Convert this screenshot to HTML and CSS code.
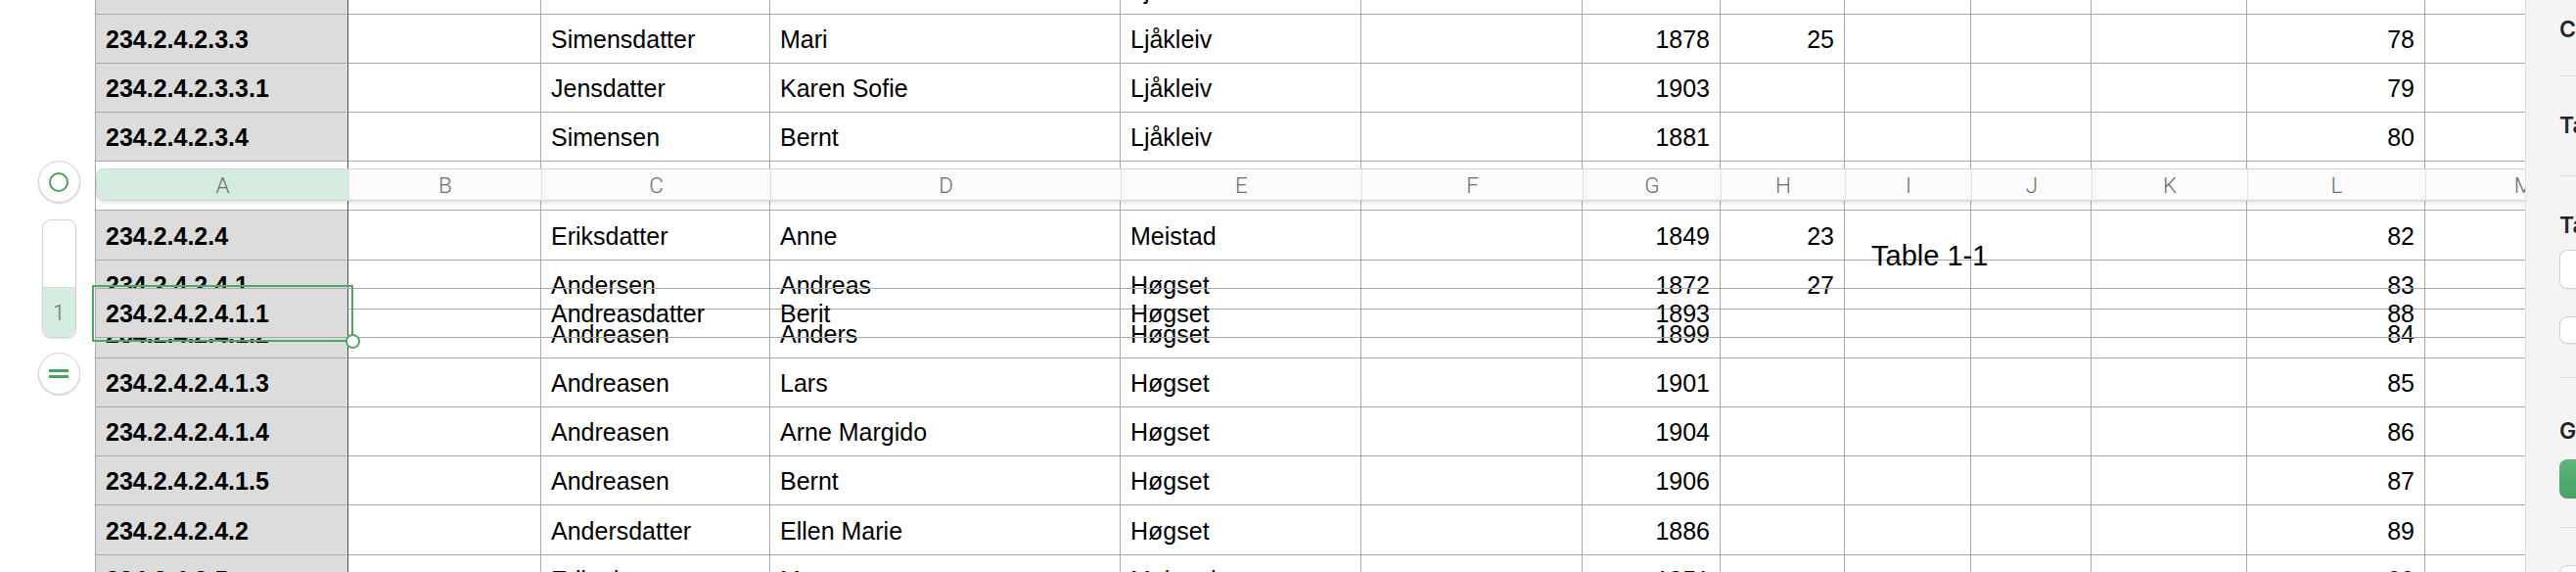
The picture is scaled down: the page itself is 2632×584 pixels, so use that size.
FILE: index.html
```html
<!DOCTYPE html>
<html lang="no">
<head>
<meta charset="utf-8">
<title>Table 1-1</title>
<link rel="stylesheet" href="styles.css">
</head>
<body>
<div class="app">
  <main class="canvas">
    <aside class="gutter">
      <div class="knob"><span class="ring"></span></div>
      <div class="pill"><span class="pill-top"></span><span class="pill-num">1</span></div>
      <div class="knob"><span class="eq"><i></i><i></i></span></div>
    </aside>

    <div class="sheet">
      <div class="row">
        <div class="c a">234.2.4.2.3.2</div><div class="c"></div><div class="c">Simensdatter</div><div class="c">Marte</div><div class="c">Ljåkleiv</div><div class="c"></div><div class="c n">1875</div><div class="c n"></div><div class="c"></div><div class="c"></div><div class="c"></div><div class="c n">77</div><div class="c"></div>
      </div>
      <div class="row">
        <div class="c a">234.2.4.2.3.3</div><div class="c"></div><div class="c">Simensdatter</div><div class="c">Mari</div><div class="c">Ljåkleiv</div><div class="c"></div><div class="c n">1878</div><div class="c n">25</div><div class="c"></div><div class="c"></div><div class="c"></div><div class="c n">78</div><div class="c"></div>
      </div>
      <div class="row">
        <div class="c a">234.2.4.2.3.3.1</div><div class="c"></div><div class="c">Jensdatter</div><div class="c">Karen Sofie</div><div class="c">Ljåkleiv</div><div class="c"></div><div class="c n">1903</div><div class="c n"></div><div class="c"></div><div class="c"></div><div class="c"></div><div class="c n">79</div><div class="c"></div>
      </div>
      <div class="row">
        <div class="c a">234.2.4.2.3.4</div><div class="c"></div><div class="c">Simensen</div><div class="c">Bernt</div><div class="c">Ljåkleiv</div><div class="c"></div><div class="c n">1881</div><div class="c n"></div><div class="c"></div><div class="c"></div><div class="c"></div><div class="c n">80</div><div class="c"></div>
      </div>
      <div class="row spacer">
        <div class="c a blank"></div><div class="c"></div><div class="c"></div><div class="c"></div><div class="c"></div><div class="c"></div><div class="c"></div><div class="c"></div><div class="c"></div><div class="c"></div><div class="c"></div><div class="c"></div><div class="c"></div>
      </div>
      <div class="row tall">
        <div class="c a">234.2.4.2.4</div><div class="c"></div><div class="c">Eriksdatter</div><div class="c">Anne</div><div class="c">Meistad</div><div class="c"></div><div class="c n">1849</div><div class="c n">23</div><div class="c"></div><div class="c"></div><div class="c"></div><div class="c n">82</div><div class="c"></div>
      </div>
      <div class="row">
        <div class="c a">234.2.4.2.4.1</div><div class="c"></div><div class="c">Andersen</div><div class="c">Andreas</div><div class="c">Høgset</div><div class="c"></div><div class="c n">1872</div><div class="c n">27</div><div class="c"></div><div class="c"></div><div class="c"></div><div class="c n">83</div><div class="c"></div>
      </div>
      <div class="row">
        <div class="c a">234.2.4.2.4.1.2</div><div class="c"></div><div class="c">Andreasen</div><div class="c">Anders</div><div class="c">Høgset</div><div class="c"></div><div class="c n">1899</div><div class="c n"></div><div class="c"></div><div class="c"></div><div class="c"></div><div class="c n">84</div><div class="c"></div>
      </div>
      <div class="row">
        <div class="c a">234.2.4.2.4.1.3</div><div class="c"></div><div class="c">Andreasen</div><div class="c">Lars</div><div class="c">Høgset</div><div class="c"></div><div class="c n">1901</div><div class="c n"></div><div class="c"></div><div class="c"></div><div class="c"></div><div class="c n">85</div><div class="c"></div>
      </div>
      <div class="row">
        <div class="c a">234.2.4.2.4.1.4</div><div class="c"></div><div class="c">Andreasen</div><div class="c">Arne Margido</div><div class="c">Høgset</div><div class="c"></div><div class="c n">1904</div><div class="c n"></div><div class="c"></div><div class="c"></div><div class="c"></div><div class="c n">86</div><div class="c"></div>
      </div>
      <div class="row">
        <div class="c a">234.2.4.2.4.1.5</div><div class="c"></div><div class="c">Andreasen</div><div class="c">Bernt</div><div class="c">Høgset</div><div class="c"></div><div class="c n">1906</div><div class="c n"></div><div class="c"></div><div class="c"></div><div class="c"></div><div class="c n">87</div><div class="c"></div>
      </div>
      <div class="row tall">
        <div class="c a">234.2.4.2.4.2</div><div class="c"></div><div class="c">Andersdatter</div><div class="c">Ellen Marie</div><div class="c">Høgset</div><div class="c"></div><div class="c n">1886</div><div class="c n"></div><div class="c"></div><div class="c"></div><div class="c"></div><div class="c n">89</div><div class="c"></div>
      </div>
      <div class="row">
        <div class="c a">234.2.4.2.5</div><div class="c"></div><div class="c">Eriksdatter</div><div class="c">Marta</div><div class="c">Meistad</div><div class="c"></div><div class="c n">1851</div><div class="c n"></div><div class="c"></div><div class="c"></div><div class="c"></div><div class="c n">90</div><div class="c"></div>
      </div>
    </div>

    <div class="colheads">
      <div class="h sel">A</div><div class="h">B</div><div class="h">C</div><div class="h">D</div><div class="h">E</div><div class="h">F</div><div class="h">G</div><div class="h">H</div><div class="h">I</div><div class="h">J</div><div class="h">K</div><div class="h">L</div><div class="h">M</div>
    </div>

    <div class="row dragged">
      <div class="c a">234.2.4.2.4.1.1</div><div class="c"></div><div class="c">Andreasdatter</div><div class="c">Berit</div><div class="c">Høgset</div><div class="c"></div><div class="c n">1893</div><div class="c n"></div><div class="c"></div><div class="c"></div><div class="c"></div><div class="c n">88</div><div class="c"></div>
    </div>

    <div class="selection"><span class="handle"></span></div>
    <div class="table-name">Table 1-1</div>
  </main>

  <aside class="sidebar">
    <div class="label first">Caption</div>
    <div class="sep s1"></div>
    <div class="label l2">Table Border</div>
    <div class="sep s2"></div>
    <div class="label l3">Table Font Size</div>
    <div class="box b1"></div>
    <div class="box b2"></div>
    <div class="sep s3"></div>
    <div class="label l4">Gridlines</div>
    <div class="gbtn"></div>
    <div class="sep s4"></div>
    <div class="box b3"></div>
  </aside>
</div>
</body>
</html>
```

FILE: styles.css
```css
* { box-sizing: border-box; }

html, body {
  margin: 0;
  padding: 0;
  width: 2632px;
  height: 584px;
  overflow: hidden;
  background: #ffffff;
  font-family: "Liberation Sans", Arial, sans-serif;
  color: #000;
}

.app {
  display: flex;
  width: 2632px;
  height: 584px;
}

.canvas {
  position: relative;
  flex: 0 0 2580px;
  height: 584px;
  overflow: hidden;
  display: flex;
  align-items: flex-start;
  background: #fff;
}

/* ---------- left controls ---------- */
.gutter {
  flex: 0 0 97px;
  display: flex;
  flex-direction: column;
  align-items: center;
  padding: 164px 0 0 23px;
}

.knob {
  width: 43px;
  height: 43px;
  border-radius: 50%;
  background: #fff;
  border: 1px solid #d2d2d2;
  box-shadow: 0 1px 2px rgba(0, 0, 0, 0.18);
  display: flex;
  align-items: center;
  justify-content: center;
}

.ring {
  width: 20px;
  height: 20px;
  border-radius: 50%;
  border: 2.5px solid #46a35a;
}

.eq {
  display: flex;
  flex-direction: column;
  gap: 3.5px;
}

.eq i {
  display: block;
  width: 20px;
  height: 2.5px;
  background: #46a35a;
}

.pill {
  margin-top: 17px;
  width: 35px;
  height: 121px;
  border: 1px solid #d2d2d2;
  border-radius: 9px;
  overflow: hidden;
  display: flex;
  flex-direction: column;
  background: #fff;
  box-shadow: 0 1px 2px rgba(0, 0, 0, 0.12);
}

.pill-top {
  flex: 0 0 69px;
  border-bottom: 1px solid #d7d7d7;
}

.pill-num {
  flex: 1;
  background: #d5ede0;
  color: #6e6e6e;
  font-family: Roboto, "Liberation Sans", sans-serif;
  font-weight: 300;
  font-size: 22px;
  display: flex;
  align-items: center;
  justify-content: center;
}

.knob + .pill + .knob { margin-top: 15px; }

/* ---------- sheet ---------- */
.sheet {
  flex: none;
  margin-top: -35px;
}

.row {
  display: grid;
  grid-template-columns: 259px 197px 234px 358px 246px 226px 141px 127px 129px 123px 159px 182px 200px;
  height: 50px;
}

.row.tall { height: 51px; }

.c {
  border-right: 1px solid #a9a9a9;
  border-bottom: 1px solid #a9a9a9;
  padding: 1px 10px 0 10px;
  display: flex;
  align-items: center;
  white-space: nowrap;
  font-size: 25px;
  line-height: 28px;
}

.c.a {
  font-weight: bold;
  background: #dcdcdc;
  border-left: 1px solid #a9a9a9;
  border-right-color: #4d4d4d;
}

.c.a.blank { background: #fff; }

.c.n { justify-content: flex-end; }

/* dragged (floating) row */
.row.dragged {
  position: absolute;
  top: 294px;
  left: 97px;
  height: 51px;
  border-top: 1px solid #a9a9a9;
  z-index: 2;
}

/* ---------- column header bar ---------- */
.colheads {
  position: absolute;
  top: 172px;
  left: 98px;
  height: 33px;
  display: grid;
  grid-template-columns: 258px 197px 234px 358px 246px 226px 141px 127px 129px 123px 159px 182px 200px;
  border: 1px solid #d3d3d3;
  border-right: 0;
  border-radius: 8px 0 0 8px;
  overflow: hidden;
  box-shadow: 0 3px 4px -1px rgba(0, 0, 0, 0.12);
  z-index: 3;
}

.h {
  background: rgba(251, 251, 251, 0.96);
  border-right: 1px solid #e3e3e3;
  color: #6e6e6e;
  font-family: Roboto, "Liberation Sans", sans-serif;
  font-weight: 300;
  font-size: 22.5px;
  display: flex;
  align-items: center;
  justify-content: center;
}

.h.sel { background: #d4ecdf; border-right-color: #d4ecdf; }

/* ---------- selection ---------- */
.selection {
  position: absolute;
  top: 291px;
  left: 94px;
  width: 267px;
  height: 58px;
  border: 2.5px solid #4fa862;
  z-index: 4;
}

.handle {
  position: absolute;
  right: -9px;
  bottom: -9px;
  width: 15px;
  height: 15px;
  border-radius: 50%;
  background: #fff;
  border: 2.5px solid #4fa862;
}

.table-name {
  position: absolute;
  top: 247px;
  left: 1912px;
  font-size: 29px;
  line-height: 28px;
  white-space: nowrap;
  z-index: 5;
}

/* ---------- sidebar ---------- */
.sidebar {
  flex: 0 0 52px;
  height: 584px;
  background: #f4f4f4;
  border-left: 1px solid #dedede;
  padding: 16px 0 0 34px;
  overflow: hidden;
  display: flex;
  flex-direction: column;
}

.label {
  font-family: Inter, "Liberation Sans", sans-serif;
  font-weight: 600;
  font-size: 23px;
  line-height: 28px;
  color: #242424;
  white-space: nowrap;
}

.sep {
  height: 1px;
  background: #dadada;
  flex: none;
  width: 200px;
}

.s1 { margin-top: 33px; }
.l2 { margin-top: 36px; }
.s2 { margin-top: 37px; }
.l3 { margin-top: 36px; }
.box {
  flex: none;
  width: 200px;
  background: #fff;
  border: 1px solid #d0d0d0;
  border-radius: 8px;
  box-shadow: 0 1px 1px rgba(0, 0, 0, 0.06);
}
.b1 { margin-top: 11px; height: 40px; }
.b2 { margin-top: 28px; height: 28px; }
.s3 { margin-top: 34px; }
.l4 { margin-top: 40px; }
.gbtn {
  flex: none;
  margin-top: 15px;
  width: 200px;
  height: 40px;
  border-radius: 8px;
  background: linear-gradient(#5cb67c, #47a163);
}
.s4 { margin-top: 29px; }
.b3 { margin-top: 38px; height: 40px; }
```
